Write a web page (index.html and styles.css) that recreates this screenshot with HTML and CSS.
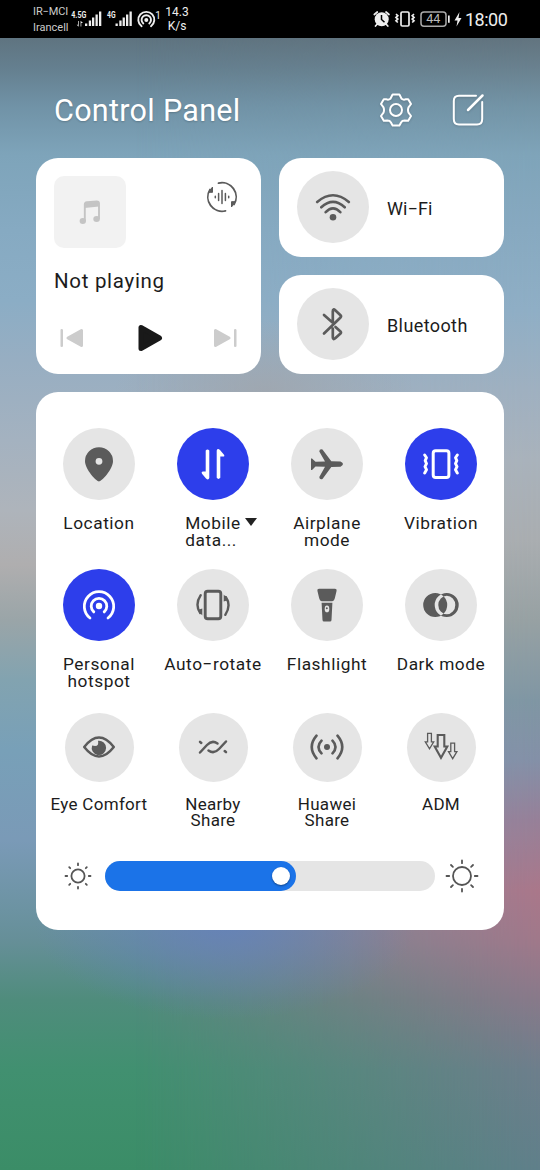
FILE: index.html
```html
<!DOCTYPE html>
<html lang="en">
<head>
<meta charset="utf-8">
<title>Control Panel</title>
<link rel="stylesheet" href="styles.css">
</head>
<body>
<div class="screen">
  <div class="statusbar">
    <div class="carriers"><span class="carrier-a">IR−MCI</span><span class="carrier-b">Irancell</span></div>
    <svg class="radio" width="92" height="38" viewBox="70 0 92 38">
      <g class="net"><text x="71.3" y="18.3" textLength="15" lengthAdjust="spacingAndGlyphs">4.5G</text><text x="107" y="18.3" textLength="8.5" lengthAdjust="spacingAndGlyphs">4G</text><text class="sup" x="155.300" y="18.800">1</text></g>
      <g fill="#eee">
        <path d="M78 21v3.700h-1.300l2 2V21zM81.300 26.500V23H83l-2.400-2.300v5.800z"/>
        <path d="M85 23.500h2.300V26H85zM88.800 20.500h2.300V26h-2.300zM92 17.500h2.300V26H92zM95.500 14.500h2.300V26h-2.300zM99 11.500h2.300V26H99z"/>
        <path d="M115.500 23.500h2.300V26h-2.300zM119.300 20.500h2.300V26h-2.300zM122.600 17.500h2.300V26h-2.300zM126 14.500h2.300V26h-2.300zM129.500 11.500h2.300V26h-2.300z"/>
        <circle cx="146.300" cy="20" r="2"/>
      </g>
      <g fill="none" stroke="#eee" stroke-width="1.900" stroke-linecap="round"><path d="M143.300 23.500a4.700 4.700 0 1 1 6 0M141.600 26.300a8 8 0 1 1 9.400 0"/></g>
    </svg>
    <div class="speed"><span>14.3</span><span>K/s</span></div>
    <svg class="indicators" width="92" height="38" viewBox="372 0 92 38">
      <circle cx="381.700" cy="19.300" r="7" fill="#eee"/>
      <path d="M381.500 15v4.500l3 2.800" fill="none" stroke="#000" stroke-width="1.500"/>
      <path d="M374.300 14.500l3-2.500M389 14.500l-3-2.500M377.300 24l-1.800 2M386 24l1.800 2" stroke="#eee" stroke-width="1.700" stroke-linecap="round"/>
      <g fill="none" stroke="#eee" stroke-width="1.700"><rect x="401" y="12" width="8" height="14" rx="1.300"/><path d="M396 14l1.800 1.700-1.800 1.700 1.800 1.700-1.800 1.700 1.800 1.700M414 14l-1.800 1.700 1.800 1.700-1.800 1.700 1.800 1.700-1.800 1.700"/></g>
      <rect x="421" y="12" width="25" height="14.300" rx="3" fill="none" stroke="#aaa" stroke-width="1.500"/>
      <path d="M448 15.500h1.700v7.300H448z" fill="#eee"/>
      <text class="charge" x="433.300" y="23.400">44</text>
      <path d="M459.500 12l-5 8.500h3l-1 6 5-8.500h-3z" fill="#eee"/>
    </svg>
    <span class="clock">18:00</span>
  </div>

  <header class="header">
    <h1 class="title">Control Panel</h1>
    <svg width="36" height="36" viewBox="-18 -18 36 36" fill="none" stroke="#fff" stroke-width="2" stroke-linejoin="round">
      <path d="M-3.400 -15.500H3.400L5.600 -11.200Q7.500 -9.700 10 -10.800L12.200 -10.800L15 -6L12.500 -2.700Q11.500 0 12.500 2.700L15 6L12.200 10.800L8.600 10.500Q6 10.500 5.200 12.300L3.400 15.500H-3.400L-5.200 12.300Q-6 10.500 -8.600 10.500L-12.200 10.800L-15 6L-12.500 2.700Q-11.500 0 -12.500 -2.700L-15 -6L-12.200 -10.800L-10 -10.800Q-7.500 -9.700 -5.600 -11.200Z"/><circle r="6"/>
    </svg>
    <svg class="edit" width="36" height="36" viewBox="-18 -18 36 36" fill="none" stroke="#fff" stroke-width="2" stroke-linecap="round">
      <path d="M8 -14.200H-9Q-14.200 -14.200 -14.200 -9V9Q-14.200 14.500 -9 14.500H9Q14.200 14.500 14.200 9V-8"/><path d="M0 0L14.500 -14.500" stroke-width="2.500"/>
    </svg>
  </header>

  <main class="content">
    <div class="top">
      <section class="card media">
        <div class="media-head">
          <div class="art"><svg width="24" height="26" viewBox="-12 -13 24 26"><path d="M-5.200 9V-7.500Q-5.200 -9.500 -3 -9.800L6.800 -10.500Q9 -10.500 9 -8.500V7" fill="none" stroke="#c4c4c4" stroke-width="1.900"/><path d="M-5.500 -9L9 -10.500V-5.500L-5.500 -4z" fill="#c4c4c4"/><ellipse cx="-7.200" cy="9" rx="3.200" ry="2.900" fill="#c4c4c4"/><ellipse cx="6.600" cy="7" rx="3.300" ry="2.900" fill="#c4c4c4"/></svg></div>
          <svg width="34" height="34" viewBox="-17 -17 34 34" fill="none" stroke="#5b5b5b" stroke-width="1.800" stroke-linecap="round"><path d="M-3.500 -13.800A14.200 14.200 0 0 1 12 7.500M3.500 13.800A14.200 14.200 0 0 1 -12 -7.500"/><path d="M-13 -5L-9.500 -10V-5zM13 5L9.500 10V5z" fill="#5b5b5b" stroke-width="1"/><path d="M-6.700 -.7V.7M-3.400 -3.500V3.500M0 -6.500V6.500M3.400 -3.500V3.500M6.700 -.7V.7" stroke-width="1.500"/></svg>
        </div>
        <p class="track-name">Not playing</p>
        <div class="controls">
          <svg width="24" height="20" viewBox="0 0 24 20"><path d="M.5 2q0-1 1.200-1T3 2v16q0 1-1.300 1T.5 18z" fill="#ccc"/><path d="M8 10L21.500 2.500V17.500z" fill="#ccc" stroke="#ccc" stroke-width="3" stroke-linejoin="round"/></svg>
          <svg class="play" width="26" height="30" viewBox="0 0 26 30"><path d="M4 4.500V25.500L22.500 15z" fill="#191919" stroke="#191919" stroke-width="5" stroke-linejoin="round"/></svg>
          <svg width="24" height="20" viewBox="0 0 24 20"><path d="M21 2q0-1 1.200-1T23.500 2v16q0 1-1.300 1T21 18z" fill="#ccc"/><path d="M16 10L2.500 2.500V17.500z" fill="#ccc" stroke="#ccc" stroke-width="3" stroke-linejoin="round"/></svg>
        </div>
      </section>
      <div class="links">
        <section class="card link">
          <div class="disc"><svg class="icon line" viewBox="-18 -18 36 36"><path d="M-15.800 -5Q0 -18.500 15.800 -5M-11.700 .3Q0 -10.500 11.700 .3M-7.300 5.200Q0 -2.500 7.300 5.200" stroke-width="2.600"/><circle class="solid" cy="10.300" r="3.300"/></svg></div>
          <span class="link-name wifi">Wi−Fi</span>
        </section>
        <section class="card link">
          <div class="disc"><svg class="icon line" viewBox="-18 -18 36 36"><path d="M-9 -9L-.5 -1.500M-9 9.500L7.500 -6.500Q8.500 -7.700 7.500 -8.700L2.500 -13.500Q-.2 -16 -.2 -12.700V-2.500M2.500 3L7.500 7.500Q8.500 8.500 7.500 9.500L2.500 14Q-.2 16.400 -.2 13.200V4.500" stroke-width="2.700"/></svg></div>
          <span class="link-name bt">Bluetooth</span>
        </section>
      </div>
    </div>

    <section class="card panel">
      <div class="tiles">
        <div class="tile"><div class="disc"><svg class="icon" viewBox="-18 -18 36 36"><path class="solid" fill-rule="evenodd" d="M0 17.500C-2.500 17.500 -14 5.500 -14 -3A14 13.700 0 0 1 14 -3C14 5.500 2.500 17.500 0 17.500ZM0 -6.100A3.400 3.400 0 1 0 0 .7A3.400 3.400 0 1 0 0 -6.100Z"/></svg></div><span class="label">Location</span></div>
        <div class="tile"><div class="disc on"><svg class="icon" viewBox="-18 -18 36 36"><path class="solid" d="M-7.300 -13.500Q-5.500 -15.500 -3.700 -13.500V14Q-4.500 16.500 -7 14.500L-11 9.700Q-12 7.700 -10 7.600H-7.300ZM7.300 13.800Q5.500 16 3.700 13.800V-13.500Q4.500 -16 7 -14L11 -9.300Q12 -7.400 10 -7.400H7.300Z"/></svg></div><span class="label data-label">Mobile<br>data...<i class="caret"></i></span></div>
        <div class="tile"><div class="disc"><svg class="icon" viewBox="-18 -18 36 36"><path class="solid" d="M-16 -5.500H-15L-11.500 -2.300L-2 -2.500L-7.700 -12.500Q-7.500 -15.500 -4.500 -14.500L4.300 -2.700L13.500 -2.500Q18.500 0 13.500 2.700L4.300 2.900L-4.500 14.900Q-7.500 16 -7.700 12.900L-2 2.700L-11.500 2.500L-15 6H-16Z"/></svg></div><span class="label">Airplane<br>mode</span></div>
        <div class="tile"><div class="disc on"><svg class="icon line" viewBox="-18 -18 36 36"><rect x="-7.800" y="-13.200" width="15.700" height="26.700" rx="2.500" stroke-width="3"/><path d="M-16.300 -9L-14.500 -6.300L-15.800 -3.300L-14.500 -.3L-16 2.700L-14.500 5.700L-16.300 9M16.300 -9L14.500 -6.300L15.800 -3.300L14.500 -.3L16 2.700L14.500 5.700L16.300 9" stroke-width="2.900"/></svg></div><span class="label">Vibration</span></div>

        <div class="tile"><div class="disc on"><svg class="icon line" viewBox="-18 -18 36 36"><circle class="solid" cy="1" r="3.200"/><path d="M-5.200 6.900A7.800 7.800 0 1 1 5.200 6.900M-9 13A14.700 14.700 0 1 1 9 13" stroke-width="2.800"/></svg></div><span class="label">Personal<br>hotspot</span></div>
        <div class="tile"><div class="disc"><svg class="icon line" viewBox="-18 -18 36 36"><rect x="-7.800" y="-13.700" width="15.600" height="27.400" rx="2.500" stroke-width="2.900"/><path d="M-12.300 -9.800Q-18.500 -.5 -12.800 8M12.300 9.800Q18.500 .5 12.800 -8" stroke-width="2.400"/><path class="solid" d="M-15.500 5L-10.700 3.500V10.500zM15.500 -5L10.700 -3.500V-10.500z"/></svg></div><span class="label">Auto−rotate</span></div>
        <div class="tile"><div class="disc"><svg class="icon" viewBox="-18 -18 36 36"><path class="solid" fill-rule="evenodd" d="M-8 -16.300H8Q10 -16.300 9.600 -14.300L8 -7.500Q7.300 -3.800 5 -3.800H-5Q-7.300 -3.800 -8 -7.500L-9.600 -14.300Q-10 -16.300 -8 -16.300ZM-5.400 -2.200H5.400L4.500 15Q4.400 16.500 3 16.500H-3Q-4.400 16.500 -4.500 15ZM0 .5A2.300 3.400 0 1 0 0 7.300A2.300 3.400 0 1 0 0 .5Z"/><circle class="solid" cx="-.2" cy="3.200" r="1"/></svg></div><span class="label">Flashlight</span></div>
        <div class="tile"><div class="disc"><svg class="icon" viewBox="-18 -18 36 36"><path class="solid" fill-rule="evenodd" d="M-17.800 0A12 12 0 1 1 6.200 0A12 12 0 1 1 -17.800 0ZM-6.300 0A12 12 0 1 1 17.700 0A12 12 0 1 1 -6.300 0ZM-2.700 0A8.500 9.300 0 1 0 14.300 0A8.500 9.300 0 1 0 -2.700 0Z"/></svg></div><span class="label">Dark mode</span></div>

        <div class="tile small"><div class="disc"><svg class="icon line" viewBox="-18 -18 36 36"><path d="M-14.800 0Q0 -19 14.800 0Q0 19 -14.800 0Z" stroke-width="2.500"/><path class="solid" d="M-6.900 -1.500A7.200 7.200 0 1 0 -1 -6.300Q.5 .5 -6.900 -1.500Z"/></svg></div><span class="label">Eye Comfort</span></div>
        <div class="tile small"><div class="disc"><svg class="icon line" viewBox="-18 -18 36 36"><path d="M-13 5.500L-6 -2Q-1 -7.300 4.500 -3.500M13 -5.500L6 2Q1 7.300 -4.500 3.500M-13 -5.200L-11.700 -4M13 5.200L11.700 4" stroke-width="2.500"/></svg></div><span class="label">Nearby<br>Share</span></div>
        <div class="tile small"><div class="disc"><svg class="icon line" viewBox="-18 -18 36 36"><circle class="solid" r="3"/><path d="M-5.500 -6.300Q-11.500 0 -5.500 6.300M5.500 -6.300Q11.500 0 5.500 6.300M-10.500 -11.300Q-20 0 -10.500 11.300M10.500 -11.300Q20 0 10.500 11.300" stroke-width="2.600"/></svg></div><span class="label">Huawei<br>Share</span></div>
        <div class="tile small"><div class="disc"><svg class="icon adm" viewBox="-18 -18 36 36"><path d="M-3.300 -12H3.300V-.5H6.300L0 10.800L-6.300 -.5H-3.300Z" stroke-width="2.100"/><path d="M-13.400 -13.700H-9.600V-5.200H-7.300L-11.500 1.800L-15.700 -5.200H-13.400ZM9.800 -3.800H13.600V4.700H15.900L11.700 11.700L7.500 4.700H9.800Z" stroke-width="1.300"/></svg></div><span class="label">ADM</span></div>
      </div>

      <div class="brightness">
        <svg width="28" height="28" viewBox="-14 -14 28 28" class="sun"><circle r="6.600"/><path d="M0 -12.500V-10.800M0 12.500V10.800M-12.500 0H-10.800M12.500 0H10.800M-8.800 -8.800L-7.800 -7.800M8.800 -8.800L7.800 -7.800M-8.800 8.800L-7.800 7.800M8.800 8.800L7.800 7.800"/></svg>
        <div class="slider"><div class="fill"><div class="knob"></div></div></div>
        <svg width="34" height="34" viewBox="-17 -17 34 34" class="sun"><circle r="9"/><path d="M0 -15.500V-12.800M0 15.500V12.800M-15.500 0H-12.800M15.500 0H12.800M-11 -11L-9.100 -9.100M11 -11L9.100 -9.100M-11 11L-9.100 9.100M11 11L9.100 9.100"/></svg>
      </div>
    </section>
  </main>
</div>
</body>
</html>
```
FILE: styles.css
```css
* { box-sizing: border-box; }
body { margin: 0; font-family: Roboto, "Noto Sans", sans-serif; color: #1c1c1c; }
svg { display: block; flex: none; }

.screen {
  position: relative;
  isolation: isolate;
  width: 540px;
  height: 1170px;
  overflow: hidden;
  background: linear-gradient(180deg, #5f7480 38px, #658090 70px, #7092a6 105px, #7ea4ba 155px, #86aac2 230px, #8badc5 300px, #97aec2 360px, #a4b2c0 440px, #aeb4bb 510px, #afaeaf 565px, #9aa5a8 620px, #82a3b0 680px, #78a0b8 750px, #7a9ab7 840px, #6c93a2 910px, #668f98 940px, #4f8c7c 1000px, #419070 1070px, #3b8d67 1170px);
}
.screen::before,
.screen::after { content: ""; position: absolute; inset: 0; z-index: -1; }
.screen::before {
  background: linear-gradient(180deg, #62747f 38px, #6a8290 70px, #7394a6 105px, #7fa4b9 155px, #87a9c0 230px, #8faec5 310px, #9fb0c0 390px, #a9b2bb 460px, #a9adb0 540px, #97a1a3 620px, #8096a3 700px, #8490a7 760px, #978098 820px, #aa778a 890px, #a0788a 940px, #88798a 1000px, #6d7e8c 1070px, #607f8a 1170px);
  -webkit-mask-image: linear-gradient(90deg, transparent 25%, #000 100%);
  mask-image: linear-gradient(90deg, transparent 25%, #000 100%);
}
.screen::after {
  background:
    radial-gradient(ellipse 190px 95px at 225px 925px, rgba(100, 130, 186, .9), rgba(100, 130, 186, 0)),
    radial-gradient(ellipse 150px 70px at 265px 390px, rgba(160, 164, 170, .7), rgba(160, 164, 170, 0));
}

.statusbar { display: flex; align-items: center; height: 38px; padding-left: 33px; background: #000; color: #eee; }
.carriers { display: flex; flex-direction: column; width: 37px; font-size: 11px; line-height: 15.500px; color: #ccc; white-space: nowrap; padding-top: 1px; }
.carrier-a { letter-spacing: -.1px; }
.carrier-b { letter-spacing: 0; }
.net text { font: 700 8.500px Roboto, sans-serif; fill: #eee; }
.net .sup { font-weight: 400; font-size: 10px; }
.speed { display: flex; flex-direction: column; align-items: center; width: 30px; font-size: 12px; line-height: 13.500px; padding-top: 1px; }
.indicators { margin-left: 180px; }
.charge { font: 400 12.500px Roboto, sans-serif; fill: #bbb; text-anchor: middle; }
.clock { margin-left: 1px; font-size: 18px; letter-spacing: -.5px; }

.header { display: flex; align-items: center; height: 120px; padding: 26px 54px 0; gap: 36px; color: #fff; }
.header svg { margin-top: -2px; filter: drop-shadow(0 1px 1px rgba(0, 0, 0, .15)); }
.title { flex: 1; margin: 0; font-size: 30.500px; font-weight: 400; line-height: 40px; letter-spacing: .3px; text-shadow: 0 1px 2px rgba(0, 0, 0, .2); }

.content { display: flex; flex-direction: column; gap: 18px; width: 467.500px; margin-left: 36px; }
.card { background: #fff; border-radius: 22px; }
.top { display: grid; grid-template-columns: 225px 224.500px; gap: 18px; height: 216px; }

.media { padding: 18px 22px 0 18px; }
.media-head { display: flex; justify-content: space-between; align-items: flex-start; height: 72px; }
.media-head > svg { margin-top: 3.500px; }
.art { display: flex; align-items: center; justify-content: center; width: 72px; height: 72px; border-radius: 10px; background: #f2f2f2; }
.track-name { margin: 20px 0 0; font-size: 20.500px; line-height: 26px; letter-spacing: .7px; }
.controls { display: flex; justify-content: space-between; align-items: center; height: 30px; margin: 29px 2px 0 6px; }
.play { margin-left: 2px; }

.links { display: grid; grid-template-rows: 98.500px 98.500px; gap: 18.500px; }
.link { display: flex; align-items: center; gap: 18px; padding-left: 18px; }
.link-name { padding-top: 3px; font-size: 18px; letter-spacing: .1px; }
.bt { letter-spacing: .4px; }

.disc { display: flex; align-items: center; justify-content: center; flex: none; width: 72px; height: 72px; border-radius: 50%; background: #e5e5e5; color: #5b5b5b; }
.on { background: #2d3eeb; color: #fff; }
.icon { width: 36px; height: 36px; }
.line { fill: none; stroke: currentColor; stroke-linecap: round; stroke-linejoin: round; }
.solid { fill: currentColor; stroke: none; }
.adm { fill: none; stroke: currentColor; }

.panel { height: 538px; padding: 36px 6px 0; }
.tiles { display: grid; grid-template-columns: repeat(4, 114px); grid-template-rows: 141px 143.500px 148.500px; }
.tile { display: flex; flex-direction: column; align-items: center; }
.small .disc { width: 69px; height: 69px; }
.label { position: relative; margin-top: 14.500px; font-size: 17.300px; line-height: 17.500px; letter-spacing: .55px; text-align: center; white-space: nowrap; }
.small .label { margin-top: 14px; font-size: 17px; line-height: 16.800px; letter-spacing: .3px; }
.data-label { text-align: left; }
.caret { position: absolute; top: 3px; right: -16px; border: 6px solid transparent; border-top: 8px solid #222; border-bottom: 0; }

.brightness { display: flex; align-items: center; height: 34px; padding-left: 22px; margin-top: -2px; }
.slider { width: 330px; height: 30px; margin: 0 10px 0 13px; border-radius: 15px; background: #e5e5e5; }
.fill { display: flex; align-items: center; justify-content: flex-end; width: 191px; height: 30px; padding-right: 6px; border-radius: 15px; background: #1b73e8; }
.knob { width: 18px; height: 18px; border-radius: 50%; background: #fff; box-shadow: 0 1px 2px rgba(0, 0, 0, .4); }
.sun { fill: none; stroke: #555; stroke-width: 1.800; stroke-linecap: round; }
```
